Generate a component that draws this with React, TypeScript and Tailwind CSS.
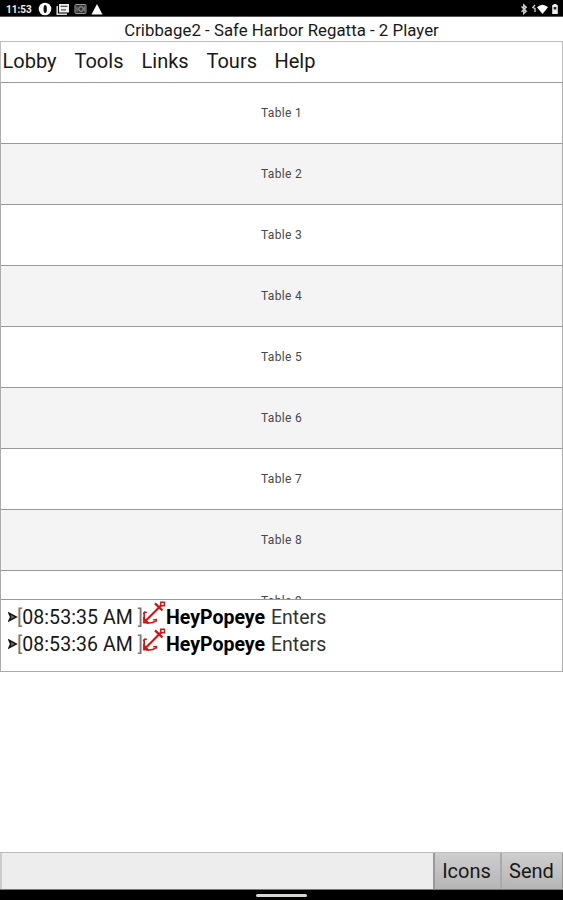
import React from "react";

const MENU = [
  { label: "Lobby", width: "w-[72px]" },
  { label: "Tools", width: "w-[67px]" },
  { label: "Links", width: "w-[65px]" },
  { label: "Tours", width: "w-[68px]" },
  { label: "Help", width: "w-[60px]" },
];
const TABLES = [1, 2, 3, 4, 5, 6, 7, 8, 9];
const MESSAGES = [
  { time: "08:53:35 AM", user: "HeyPopeye" },
  { time: "08:53:36 AM", user: "HeyPopeye" },
];

function StatusBar() {
  return (
    <header className="flex h-[17px] shrink-0 items-center border-b border-[#555] bg-black pl-[6px] pr-[4px] text-[#eee]">
      <span className="w-[26px] whitespace-nowrap pt-[3px] text-[10px] font-bold leading-none">11:53</span>
      <svg className="ml-[6px] mt-px" width="14" height="14" viewBox="0 0 14 14">
        <circle cx="7" cy="7" r="6.3" fill="#fff" />
        <ellipse cx="7.2" cy="7" rx="1.7" ry="3.9" fill="#111" />
      </svg>
      <svg className="ml-[4px] mt-px" width="14" height="14" viewBox="0 0 14 14">
        <path d="M3 2h10v8.5H3z" fill="#eee" />
        <path d="M1.2 4v8.3H11" fill="none" stroke="#ddd" strokeWidth="1.5" />
        <path d="M4.5 4.4h7M5 7.8h5" stroke="#555" strokeWidth="1.2" />
      </svg>
      <svg className="ml-[4px] mt-px" width="13" height="14" viewBox="0 0 13 14">
        <rect x="1" y="2.5" width="11" height="9" rx="1" fill="#333" stroke="#999" />
        <circle cx="7" cy="7" r="2.3" fill="none" stroke="#aaa" />
        <path d="M3 4.5v5M10.3 4.5v5" stroke="#888" />
      </svg>
      <svg className="ml-[4px] mt-px" width="12" height="14" viewBox="0 0 12 14">
        <path d="M6 2 11.5 12.5H.5z" fill="#fff" />
      </svg>
      <span className="grow" />
      <svg className="mt-[2px]" width="8" height="12" viewBox="0 0 8 12">
        <path d="m1.5 3.5 4.7 4.8L3.8 10.5V2l2.4 2.2-4.7 4.5" fill="none" stroke="#ccc" strokeWidth="1.5" />
      </svg>
      <svg className="ml-[3px]" width="5" height="12" viewBox="0 0 5 12">
        <path d="M4 3 1.8 5.5 4 6.5V10" fill="none" stroke="#ccc" strokeWidth="1.3" />
      </svg>
      <svg className="mt-[2px]" width="13" height="12" viewBox="0 0 13 12">
        <path d="M1 4.2Q6.5-.8 12 4.2L6.5 11z" fill="#fff" />
      </svg>
      <svg className="ml-[2px] mt-[2px]" width="8" height="12" viewBox="0 0 8 12">
        <path d="M2.5 1h3v1h1.3v9H1.2V2h1.3z" fill="#eee" />
        <path d="M2.7 4h2.6v2.5H2.7z" fill="#222" />
      </svg>
    </header>
  );
}

function AnchorIcon() {
  return (
    <svg className="-ml-px -mt-[1px] shrink-0" width="24" height="25" viewBox="0 0 24 25" fill="none" stroke="#d31313">
      <path d="M3 20.5 19.5 4" strokeWidth="2.2" />
      <path d="m13 2.3 7.5 7.2" strokeWidth="2.3" />
      <path d="M18.8 1.2h3.6v3.6h-3.6z" strokeWidth="1.5" />
      <path d="M2.2 19V11.5M4.5 21.8c3.5.6 6.8 0 9.8-2.2" strokeWidth="1.7" />
      <path d="m1.2 13 1.4-2 2.3.4M11 18.9l3.5-.5v2" strokeWidth="1.3" />
      <path d="m1.4 16.2 5.6 5.9H1.4z" fill="#d31313" strokeWidth="0.8" />
    </svg>
  );
}

export default function App() {
  return (
    <div className="flex h-[900px] w-[563px] flex-col overflow-hidden bg-white font-[Roboto,sans-serif] text-[#181818]">
      <StatusBar />
      <h1 className="h-[24px] shrink-0 whitespace-nowrap text-center text-[16.8px] leading-[26px] tracking-[0.03px]">
        Cribbage2 - Safe Harbor Regatta - 2 Player
      </h1>
      <nav className="flex h-[41px] shrink-0 border-x border-t border-[#bdbdbd] pl-[1.5px] text-[20px] leading-[38px]">
        {MENU.map((m) => (
          <span key={m.label} className={m.width}>{m.label}</span>
        ))}
      </nav>
      <main className="h-[517px] shrink-0 overflow-hidden border-x border-[#ababab]">
        {TABLES.map((n) => (
          <div
            key={n}
            className="flex h-[61px] items-center justify-center border-t border-[#989898] bg-white text-[12px] tracking-[0.3px] text-[#484848] even:bg-[#f4f4f4]"
          >
            Table {n}
          </div>
        ))}
      </main>
      <section className="h-[73px] shrink-0 border border-[#ababab] border-t-[#999] pl-[7px] pt-[2px] text-[19.5px]">
        {MESSAGES.map((m) => (
          <p key={m.time} className="flex h-[27px] whitespace-nowrap leading-[31px]">
            <svg className="mt-[10px] shrink-0" width="10" height="10" viewBox="0 0 10 10">
              <path d="M1 1.2 8.2 5 1 8.8 2.7 5z" fill="#777" stroke="#111" strokeWidth="1.5" />
            </svg>
            <span className="-ml-px w-[126px] shrink-0 tracking-[0.07px]"><span className="text-[#777]">[</span>{m.time} <span className="text-[#777]">]</span></span>
            <AnchorIcon />
            <b className="w-[105px] font-bold text-black">{m.user}</b>
            <span className="text-[#333]">Enters</span>
          </p>
        ))}
      </section>
      <div className="grow" />
      <footer className="flex h-[38px] shrink-0 border-y border-b-[#777] border-t-[#bcbcbc] bg-[#ededed] text-[20px] leading-[35px]">
        <div className="w-[433px] border-l-2 border-[#ccc]" />
        <button className="w-[67px] border-l-2 border-[#999] bg-linear-to-b from-[#cecece] to-[#b5b5b5] pr-[2px]">Icons</button>
        <button className="w-[63px] border-l-2 border-r border-l-[#aaa] border-r-[#999] bg-linear-to-b from-[#cecece] to-[#b5b5b5] pr-px">Send</button>
      </footer>
      <div className="flex h-[10px] shrink-0 justify-center bg-black pt-[4px]">
        <span className="h-[3px] w-[51px] rounded-full bg-[#d6d6d0]" />
      </div>
    </div>
  );
}
